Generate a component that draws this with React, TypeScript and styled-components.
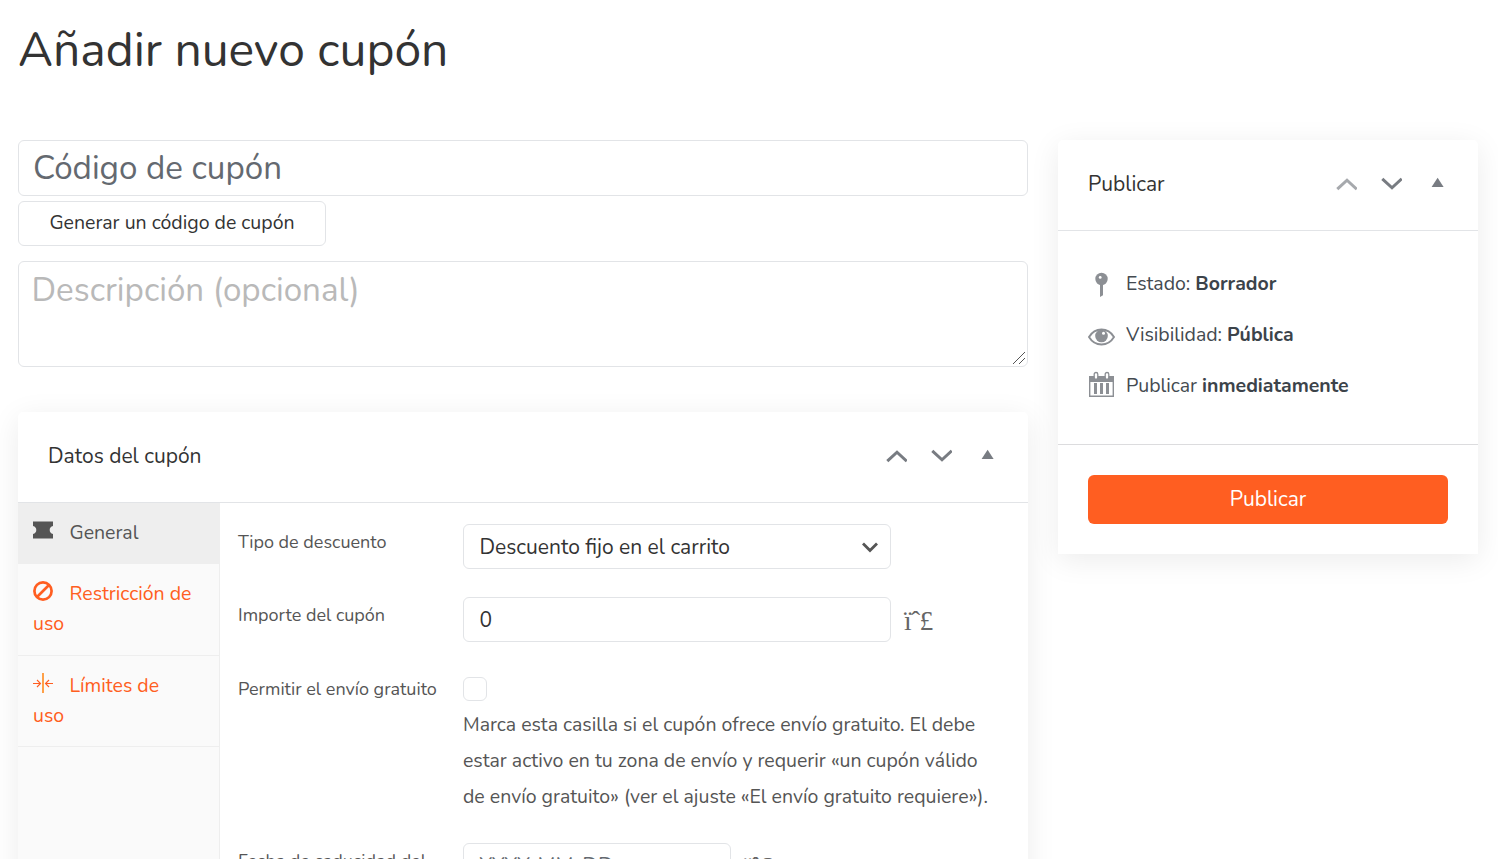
import React from 'react';
import styled, { createGlobalStyle } from 'styled-components';

const GlobalStyle = createGlobalStyle`
  *, *::before, *::after { box-sizing: border-box; }
  html, body { margin: 0; height: 859px; overflow: hidden; background: #fff; }
  body { font-family: Nunito, Lato, sans-serif; font-weight: 400; color: #555; }
  input, textarea, button { font-family: inherit; font-weight: inherit; margin: 0; outline: none; }
`;

const Page = styled.main`
  height: 859px;
  padding: 0 20px 0 18px;
  overflow: hidden;
`;

const Title = styled.h1`
  margin: 0;
  height: 140px;
  padding-top: 20px;
  font-size: 48px;
  line-height: 60px;
  font-weight: 400;
  color: #333;
`;

const Columns = styled.div`
  display: grid;
  grid-template-columns: 1010px 420px;
  column-gap: 30px;
  align-items: start;
`;

const Column = styled.div`
  display: flex;
  flex-direction: column;
  align-items: flex-start;
`;

const CodeInput = styled.input`
  width: 100%;
  height: 56px;
  padding: 0 14px;
  border: 1px solid #e2e4e7;
  border-radius: 6px;
  font-size: 33.15px;
  color: #333;
  &::placeholder { color: #646970; opacity: 1; }
`;

const GenerateButton = styled.button`
  width: 308px;
  height: 45px;
  margin-top: 5px;
  padding: 0 0 2px;
  border: 1px solid #e2e4e7;
  border-radius: 6px;
  background: #fff;
  font-size: 19.5px;
  color: #333;
`;

const DescriptionBox = styled.div`
  position: relative;
  width: 100%;
  margin-top: 15px;
`;

const Description = styled.textarea`
  display: block;
  width: 100%;
  height: 106px;
  padding: 6px 12.5px;
  border: 1px solid #e2e4e7;
  border-radius: 6px;
  font-size: 33.15px;
  line-height: 45px;
  resize: none;
  &::placeholder { color: #b9b9b9; opacity: 1; }
`;

const ResizeGrip = styled.svg`
  position: absolute;
  right: 2px;
  bottom: 2px;
`;

const Card = styled.section<{ $top?: number }>`
  width: 100%;
  margin-top: ${(p) => p.$top ?? 0}px;
  border-radius: 5px 5px 0 0;
  background: #fff;
  box-shadow: 0 6px 30px rgba(0, 0, 0, 0.08);
`;

const CardHeader = styled.header`
  display: flex;
  align-items: center;
  height: 91px;
  padding: 0 34px 2px 30px;
  border-bottom: 1px solid #e2e4e7;
`;

const CardTitle = styled.h2`
  flex: 1;
  margin: 0;
  font-size: 21px;
  font-weight: 400;
  color: #333;
`;

const Arrow = styled.svg<{ $dim?: boolean; $gap: number }>`
  margin-left: ${(p) => p.$gap}px;
  color: #787c82;
  opacity: ${(p) => (p.$dim ? 0.65 : 1)};
`;

const CardBody = styled.div`
  display: flex;
  height: 500px;
`;

const Tabs = styled.nav`
  width: 202px;
  flex: none;
  border-right: 1px solid #eee;
  background: #fafafa;
`;

const Tab = styled.a<{ $active?: boolean }>`
  display: block;
  padding: 15.2px 15px 15.1px;
  border-bottom: 1px solid #eee;
  background: ${(p) => (p.$active ? '#eee' : 'transparent')};
  color: ${(p) => (p.$active ? '#555' : '#ff5e21')};
  font-size: 19.5px;
  line-height: 30px;
  svg { margin-right: 16.5px; vertical-align: -1px; }
`;

const Form = styled.div`
  padding: 21px 0 0 18px;
`;

const Field = styled.div<{ $gap: number }>`
  display: grid;
  grid-template-columns: 225px 540px;
  margin-bottom: ${(p) => p.$gap}px;
`;

const Label = styled.label`
  padding-top: 6px;
  font-size: 18px;
  line-height: 24px;
`;

const Control = styled.div`
  display: flex;
  align-items: center;
`;

const TextBox = styled.div<{ $width: number; $muted?: boolean }>`
  display: flex;
  align-items: center;
  justify-content: space-between;
  width: ${(p) => p.$width}px;
  height: 45px;
  padding: 0 11px 0 15.5px;
  border: 1px solid #e2e4e7;
  border-radius: 6px;
  font-size: 21px;
  color: ${(p) => (p.$muted ? '#646970' : '#333')};
`;

const Help = styled.span`
  margin: 2px 0 0 13px;
  font-family: "Liberation Serif", serif;
  font-size: 27.5px;
  letter-spacing: -0.6px;
  line-height: 30px;
  color: #666;
`;

const Checkbox = styled.span`
  display: block;
  width: 24px;
  height: 24px;
  margin-top: 6px;
  border: 1px solid #e2e4e7;
  border-radius: 6px;
`;

const Note = styled.p`
  margin: 6px 0 0;
  font-size: 19.5px;
  line-height: 36px;
  white-space: pre-line;
`;

const PublishInfo = styled.div`
  height: 214px;
  padding: 27px 30px 0;
  border-bottom: 1px solid #dcdcde;
`;

const InfoRow = styled.div<{ $iconTop: number }>`
  display: flex;
  align-items: center;
  height: 51px;
  font-size: 19.5px;
  color: #444a50;
  svg { margin: ${(p) => p.$iconTop}px 11px 0 0; color: #8c8f94; flex: none; }
  strong { margin-left: 5px; font-weight: 700; color: #3c434a; }
`;

const PublishFooter = styled.footer`
  padding: 30px;
`;

const PublishButton = styled.button`
  display: block;
  width: 360px;
  height: 49px;
  padding: 0 0 2px;
  border: 0;
  border-radius: 6px;
  background: #ff5e21;
  color: #fff;
  font-size: 21px;
`;

function HeaderArrows({ dimUp = false }: { dimUp?: boolean }) {
  return (
    <>
      <Arrow $gap={0} $dim={dimUp} width="22" height="14" viewBox="0 0 22 14">
        <path d="M2.3 12.2L12 3.2L21.7 12.2" fill="none" stroke="currentColor" strokeWidth="3" />
      </Arrow>
      <Arrow $gap={23} width="22" height="14" viewBox="0 0 22 14">
        <path d="M2.3 1.8L12 10.8L21.7 1.8" fill="none" stroke="currentColor" strokeWidth="3" />
      </Arrow>
      <Arrow $gap={28} width="14" height="14" viewBox="0 0 14 14">
        <path d="M1.6 10L7.6 0.7L13.6 10Z" fill="currentColor" />
      </Arrow>
    </>
  );
}

const TicketIcon = () => (
  <svg width="20" height="20" viewBox="0 0 20 20">
    <path d="M0 1.5H20V6C17.8 6.5 16.7 8 16.7 10S17.8 13.5 20 14V18.5H0V14C2.2 13.5 3.3 12 3.3 10S2.2 6.5 0 6Z" fill="currentColor" />
  </svg>
);

const BanIcon = () => (
  <svg width="20" height="20" viewBox="0 0 20 20" fill="none" stroke="currentColor" strokeWidth="2.7">
    <circle cx="10" cy="10" r="8.6" />
    <path d="M4 16L16 4" />
  </svg>
);

const LimitsIcon = () => (
  <svg width="20" height="20" viewBox="0 0 20 20" fill="none" stroke="currentColor" strokeWidth="1.1">
    <path d="M10 0V20" stroke="#ff8a1c" strokeWidth="1.6" />
    <path d="M0 10.5H7M4 7L7.5 10.5L4 14M20 10.5H13M16 7L12.5 10.5L16 14" />
  </svg>
);

const PinIcon = () => (
  <svg width="27" height="26" viewBox="0 0 27 26">
    <path d="M12 11H15V23.3L12 25Z" fill="currentColor" />
    <circle cx="13.5" cy="7" r="6.2" fill="currentColor" />
    <circle cx="12.2" cy="5.4" r="1.4" fill="#fff" />
  </svg>
);

const EyeIcon = () => (
  <svg width="27" height="26" viewBox="0 0 27 26">
    <path d="M1 14C7 4 20 4 26 14C20 24 7 24 1 14Z" fill="none" stroke="currentColor" strokeWidth="1.9" />
    <circle cx="13.5" cy="13" r="6.3" fill="currentColor" />
    <circle cx="15.5" cy="10.3" r="1.5" fill="#fff" />
  </svg>
);

const CalendarIcon = () => (
  <svg width="27" height="26" viewBox="0 0 27 26">
    <path fillRule="evenodd" d="M1 5H26V26H1ZM2.4 11V24.6H24.6V11Z" fill="currentColor" />
    <path d="M6 12H9V23H6ZM12 12H15V23H12ZM18 12H21V23H18Z" fill="currentColor" />
    <rect x="6.2" y="1.5" width="3.6" height="6.8" rx="1.8" fill="#fff" stroke="currentColor" strokeWidth="1.3" />
    <rect x="17.2" y="1.5" width="3.6" height="6.8" rx="1.8" fill="#fff" stroke="currentColor" strokeWidth="1.3" />
  </svg>
);

const SelectChevron = () => (
  <svg width="18" height="12" viewBox="0 0 18 12">
    <path d="M2 2.5L9 9.5L16 2.5" fill="none" stroke="#555" strokeWidth="2.8" />
  </svg>
);

export default function App() {
  return (
    <>
      <GlobalStyle />
      <Page>
        <Title>Añadir nuevo cupón</Title>
        <Columns>
          <Column>
            <CodeInput placeholder="Código de cupón" />
            <GenerateButton>Generar un código de cupón</GenerateButton>
            <DescriptionBox>
              <Description placeholder="Descripción (opcional)" />
              <ResizeGrip width="14" height="14" viewBox="0 0 14 14">
                <path d="M1 13L13 1M7 13L13 7" fill="none" stroke="#555" strokeWidth="1" />
              </ResizeGrip>
            </DescriptionBox>
            <Card $top={45}>
              <CardHeader>
                <CardTitle>Datos del cupón</CardTitle>
                <HeaderArrows />
              </CardHeader>
              <CardBody>
                <Tabs>
                  <Tab $active><TicketIcon />General</Tab>
                  <Tab><BanIcon />Restricción de uso</Tab>
                  <Tab><LimitsIcon />Límites de<br />uso</Tab>
                </Tabs>
                <Form>
                  <Field $gap={28}>
                    <Label>Tipo de descuento</Label>
                    <Control><TextBox $width={428}>Descuento fijo en el carrito<SelectChevron /></TextBox></Control>
                  </Field>
                  <Field $gap={29}>
                    <Label>Importe del cupón</Label>
                    <Control><TextBox $width={428}>0</TextBox><Help>ïˆ£</Help></Control>
                  </Field>
                  <Field $gap={28}>
                    <Label>Permitir el envío gratuito</Label>
                    <div>
                      <Checkbox />
                      <Note>{'Marca esta casilla si el cupón ofrece envío gratuito. El debe\nestar activo en tu zona de envío y requerir «un cupón válido\nde envío gratuito» (ver el ajuste «El envío gratuito requiere»).'}</Note>
                    </div>
                  </Field>
                  <Field $gap={0}>
                    <Label>Fecha de caducidad del</Label>
                    <Control><TextBox $width={268} $muted>YYYY-MM-DD</TextBox><Help>ïˆ£</Help></Control>
                  </Field>
                </Form>
              </CardBody>
            </Card>
          </Column>
          <Card>
            <CardHeader>
              <CardTitle>Publicar</CardTitle>
              <HeaderArrows dimUp />
            </CardHeader>
            <PublishInfo>
              <InfoRow $iconTop={2}><PinIcon />Estado: <strong>Borrador</strong></InfoRow>
              <InfoRow $iconTop={3}><EyeIcon />Visibilidad: <strong>Pública</strong></InfoRow>
              <InfoRow $iconTop={-4}><CalendarIcon />Publicar <strong>inmediatamente</strong></InfoRow>
            </PublishInfo>
            <PublishFooter>
              <PublishButton>Publicar</PublishButton>
            </PublishFooter>
          </Card>
        </Columns>
      </Page>
    </>
  );
}
